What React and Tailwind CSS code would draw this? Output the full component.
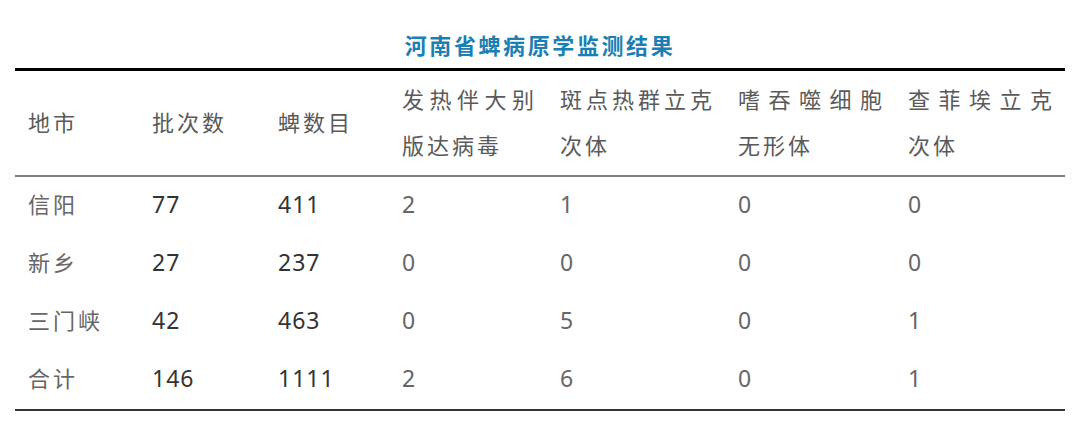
import React from 'react';

const headers = [
  { lines: ['地市'] },
  { lines: ['批次数'] },
  { lines: ['蜱数目'] },
  { lines: ['发热伴大别', '版达病毒'] },
  { lines: ['斑点热群立克', '次体'] },
  { lines: ['嗜吞噬细胞', '无形体'] },
  { lines: ['查菲埃立克', '次体'] },
];

const rows = [
  ['信阳', '77', '411', '2', '1', '0', '0'],
  ['新乡', '27', '237', '0', '0', '0', '0'],
  ['三门峡', '42', '463', '0', '5', '0', '1'],
  ['合计', '146', '1111', '2', '6', '0', '1'],
];

const widths = ['w-[124px]', 'w-[126px]', 'w-[124px]', 'w-[158px]', 'w-[178px]', 'w-[170px]', 'w-[170px]'];

export default function App() {
  return (
    <div className="w-[1080px] h-[429px] bg-white font-['Noto_Sans','Noto_Sans_CJK_SC',sans-serif]">
      <div className="pt-[30px] h-[68px] text-center text-[22px] leading-[30px] font-bold tracking-[2.6px] text-[#1b7fb3]">
        河南省蜱病原学监测结果
      </div>
      <table className="mx-[15px] w-[1050px] border-collapse table-fixed text-[22px] tracking-[3px]">
        <colgroup>
          {widths.map((w, i) => (
            <col key={i} className={w} />
          ))}
        </colgroup>
        <thead>
          <tr className="border-t-[3px] border-t-black border-b-2 border-b-[#7e7e7e]">
            {headers.map((h, i) => (
              <th key={i} className="px-[13px] pt-[5px] pb-[7px] text-left font-normal text-[#5a5a5a] leading-[46px] align-middle">
                {h.lines.length > 1 ? (
                  <>
                    <span className="block text-justify [text-align-last:justify] tracking-normal">{h.lines[0]}</span>
                    <span className="block">{h.lines[1]}</span>
                  </>
                ) : (
                  h.lines[0]
                )}
              </th>
            ))}
          </tr>
        </thead>
        <tbody className="border-b-2 border-b-[#333]">
          {rows.map((r, ri) => (
            <tr key={ri}>
              {r.map((c, ci) => (
                <td
                  key={ci}
                  className={`px-[13px] pb-[4px] h-[58.5px] leading-[46px] align-middle ${
                    ci === 0 ? 'text-[#666]' : ci <= 2 ? 'text-[23px] tracking-[1px] text-[#333]' : 'text-[23px] tracking-[1px] text-[#666]'
                  }`}
                >
                  {c}
                </td>
              ))}
            </tr>
          ))}
        </tbody>
      </table>
    </div>
  );
}
